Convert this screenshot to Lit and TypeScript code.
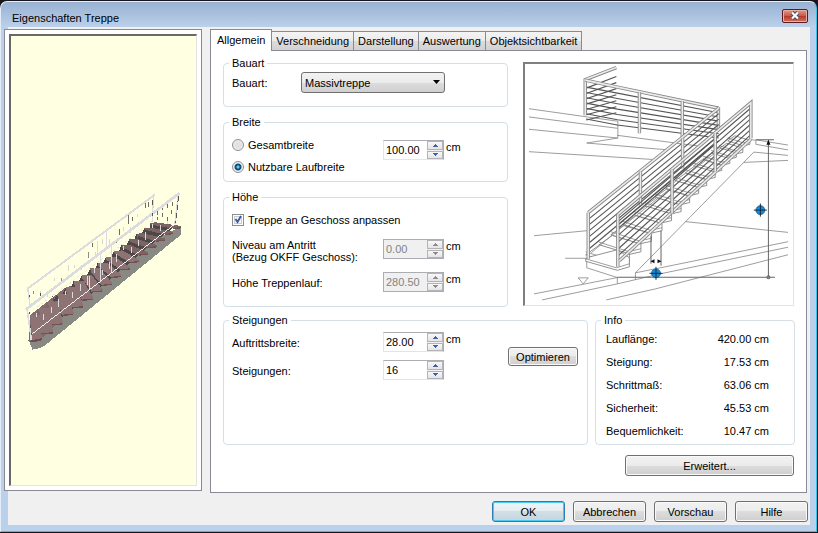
import { LitElement, html, css, svg } from "lit";
import { customElement, property, state } from "lit/decorators.js";
import { classMap } from "lit/directives/class-map.js";

const controls = css`
  * { box-sizing: border-box; }
  button, select, input { font: inherit; color: inherit; margin: 0; }
  svg { display: block; }
`;

type Pt = [number, number];
const pts = (p: Pt[]) => p.map((q) => q.join(",")).join(" ");

/* ---------- number box with up and down buttons ---------- */
@customElement("spin-box")
export class SpinBox extends LitElement {
  @property() value = "";
  @property() label = "";
  @property() unit = "";
  @property({ type: Boolean }) disabled = false;

  static styles = [controls, css`
    :host { display: flex; align-items: flex-start; gap: 2px; line-height: 14px; }
    .box { display: flex; width: 61px; height: 20px; border: 1px solid #e3e3e8; border-top-color: #abadb3; border-right-color: #abadb3; background: #fff; }
    .box.off { background: #f0f0f0; border-color: #abadb3; color: #838383; }
    input { flex: 1; min-width: 0; border: 0; padding: 0 0 0 2px; background: none; line-height: 18px; outline: 0; }
    .arrows { display: flex; flex-direction: column; width: 16px; background: #f0f0f0; gap: 1px; }
    .arrows button { flex: 1; min-height: 0; padding: 0; display: grid; place-items: center; border: 1px solid #b4b4b8; background: linear-gradient(#f8f8f8, #e4e4e8); }
    path { fill: #4a5da8; }
    .off path { fill: #8c8c8c; }
  `];

  private step(by: number) {
    const digits = this.value.includes(".") ? 2 : 0;
    this.value = (parseFloat(this.value) + by).toFixed(digits);
  }

  render() {
    return html`
      <div class=${classMap({ box: true, off: this.disabled })}>
        <input aria-label=${this.label} .value=${this.value} ?disabled=${this.disabled} />
        <div class="arrows">
          <button aria-label="+" ?disabled=${this.disabled} @click=${() => this.step(1)}>
            <svg width="5" height="3"><path d="M2 0h1v1h1v1h1v1H0V2h1V1h1z" /></svg>
          </button>
          <button aria-label="-" ?disabled=${this.disabled} @click=${() => this.step(-1)}>
            <svg width="5" height="3"><path d="M0 0h5v1H4v1H3v1H2V2H1V1H0z" /></svg>
          </button>
        </div>
      </div>
      <span>${this.unit}</span>`;
  }
}

/* ---------- rendered stair in the left pane ---------- */
@customElement("stair-preview")
export class StairPreview extends LitElement {
  static styles = css`
    :host { display: flex; background: #ffffe1; }
    svg { width: 100%; height: 100%; }
  `;

  render() {
    const right: Pt[] = [[547, 140], [523, 158], [497, 178], [472, 198], [445, 220], [420, 243], [392, 265], [365, 288], [337, 312], [308, 332], [280, 357], [250, 380], [220, 403], [187, 432], [157, 459], [123, 482]];
    const left: Pt[] = [[450, 130], [434, 146], [410, 163], [388, 180], [365, 197], [342, 215], [318, 234], [293, 252], [270, 268], [245, 289], [220, 307], [196, 325], [170, 346], [142, 368], [115, 390], [88, 410]];
    const steps = right.map((r, i) => {
      const l = left[i];
      const nextL = left[i + 1] ?? [80, 470];
      const nextR = right[i + 1] ?? [95, 490];
      const riser: Pt[] = [l, [r[0] - 26, r[1] + 3], [nextR[0] - 14, nextR[1] - 2], [nextL[0] + 16, nextL[1]]];
      const w = Math.min(20 + i, 32);
      const thick = 5 + i * 0.7;
      const tread: Pt[] = [l, [l[0] + w, l[1] - 1], r, [r[0] - 1, r[1] + 6], [r[0] - w - 4, r[1] + 8], [l[0] + 2, l[1] + thick]];
      return svg`<polygon points=${pts(riser)} fill=${i < 13 ? "#4d4747" : "#80686a"} />
        <polygon points=${pts(tread)} fill=${i < 5 ? "#7c6464" : "#8d7373"} />
        <path d="M${r[0] - w - 4} ${r[1] + 8}L${r[0] - 1} ${r[1] + 5}" stroke="#755052" stroke-width="4" />`;
    });
    const ticks = Array.from({ length: 16 }, (_, i) => {
      const x = 98 + i * 21;
      const y = 335 - (x - 80) * 0.74 + 14 + ((i * 7) % 5) * 8;
      return svg`<path d="M${x} ${y}v${9 + (i % 3) * 5}" stroke=${i % 4 ? "#d8d8d0" : "#8c8c86"} stroke-width="3" />`;
    });
    const balusters = Array.from({ length: 19 }, (_, i) => {
      const x = 108 + i * 22;
      const y = 450 - (x - 95) * 0.77 - 36 + ((i * 3) % 4) * 7;
      return svg`<path d="M${x} ${y}v${13 + (i % 4) * 4}" stroke="#dedede" stroke-width="3" />`;
    });
    const dots = Array.from({ length: 11 }, (_, i) => svg`<rect x=${85 + ((i * 37) % 75)} y=${350 + ((i * 23) % 50) - ((i * 37) % 75) * 0.4} width="3" height="4" fill="#55554f" />`);
    const hanging: [number, number, number][] = [[475, 92, 14], [490, 80, 12], [505, 68, 16], [520, 66, 12], [475, 112, 9], [490, 100, 12], [505, 112, 14], [518, 92, 10], [438, 70, 14], [448, 66, 16], [385, 108, 26], [397, 114, 12], [358, 150, 16], [278, 190, 14], [415, 165, 12]];
    return html`
      <svg viewBox="30 -435 561 1359" aria-label="3D" shape-rendering="crispEdges">
        <polygon points="85,488 95,515 118,510 132,503 547,165 547,141 480,175 130,455" fill="#898984" />
        <polygon points="85,488 88,410 196,326 300,300 130,475" fill="#846c6d" />
        ${steps}
        <path d="M85 488L123 480V486L90 492Z" fill="#704c4e" />
        ${ticks}${balusters}${dots}
        ${hanging.map(([x, y, h]) => svg`<path d="M${x} ${y}v${h}" stroke="#6d6d68" stroke-width="3" />`)}
        <g fill="none" stroke="#dcdce0">
          <path d="M80 330L466 45" stroke-width="6" />
          <path d="M81 330L88 385M320 153V205M301 225V308M334 198V280M292 185V225M268 290V330M462 50L458 128" stroke-width="4" />
          <path d="M110 385L440 142" stroke-width="2" stroke-dasharray="8 7" />
          <path d="M75 393L541 40" stroke-width="8" />
          <path d="M79 392L92 487M538 42L527 135" stroke-width="5" />
          <path d="M94 467L526 135" stroke="#f5f5f5" stroke-width="3" />
        </g>
        <path d="M538 50L529 130M460 60v16M459 100v10M85 400v6M89 440v8M92 465v5" stroke="#55554f" stroke-width="3" stroke-dasharray="16 9" />
      </svg>`;
  }
}

/* ---------- line drawing of the stair with its dimensions ---------- */
@customElement("stair-drawing")
export class StairDrawing extends LitElement {
  static styles = css`
    :host { display: flex; background: #fff; }
    svg { width: 100%; height: 100%; }
    .thin { fill: none; stroke: #858585; stroke-width: 0.8; }
    .rail { fill: none; stroke: #888; stroke-width: 3.4; }
    .core { fill: none; stroke: #ececec; stroke-width: 1.6; }
    .rung { fill: none; stroke: #555; stroke-width: 1.1; }
    .step { fill: #fff; stroke: #777; stroke-width: 0.8; }
    .dim { fill: none; stroke: #666; stroke-width: 1; }
  `;

  private bar(d: string) {
    return svg`<path class="rail" d=${d} /><path class="core" d=${d} />`;
  }

  render() {
    const upperRungs = [0, 1, 2, 3, 4, 5, 6].map((i) => svg`
      <path class="rung" d="M586 ${87 + i * 5.3}L617 ${93 + i * 5.3}L718 ${112.5 + i * 4.2}" />
      <path class="rung" d="M586 ${88 + i * 5.3}L616 ${76.5 + i * 6}" />`);
    const backRungs = [1, 2, 3, 4, 5, 6].map((i) => svg`<path class="rung" d="M589 ${212 + i * 6}L718 ${108 + i * 5.4}" />`);
    const frontRungs = [1, 2, 3, 4, 5, 6].map((i) => svg`<path class="rung" d="M618 ${214 + i * 6.8}L750 ${102.5 + i * 5.3}" />`);
    const ends: Pt[] = [[749, 144], [742, 152], [735.5, 157], [729, 163], [721, 170], [714.5, 177], [706, 185], [698, 193], [689, 202], [680.5, 211], [671, 220], [661.5, 230], [651, 240.5], [640.5, 251], [629, 261]];
    const treads = ends.map(([x, y], i) => {
      const s = 0.5 + i * 0.035;
      const a: Pt = [x - 13 * s, y + 3 * s];
      const b: Pt = [x - 44 * s, y - 7 * s];
      return svg`<polygon class="step" points=${pts([b, a, [x, y], [x, y - 8 * s], [x - 30 * s, y - 17 * s]])} />
        <path class="thin" d="M${b[0]} ${b[1] - 3}L${a[0]} ${a[1] - 3}L${x} ${y - 3}" />`;
    });
    const target = (x: number, y: number) => svg`
      <circle cx=${x} cy=${y} r="4.4" fill="#0f8ee0" stroke="#14507c" stroke-width="0.8" />
      <path d="M${x - 6.5} ${y}h13M${x} ${y - 6.5}v13" stroke="#102030" stroke-width="0.9" />`;
    return html`
      <svg viewBox="525 64 267 240" aria-label="Treppe">
        <path class="thin" d="M529 108.500L587 116.700L617.500 121V137.500M529 116.700L617 128M529 129L617.500 137.700L586.500 142.700L665 149.300M529 151.300L651.500 159M617 135L700 146M534 235L587 230M565 257.500H587" />
        ${upperRungs}
        ${this.bar("M585 115V79.500L616 67.500")}
        ${this.bar("M585 80L617 87L718 108")}
        ${this.bar("M639 92V133")}
        ${this.bar("M681.700 101V138")}
        ${this.bar("M717.700 107V130")}
        <path class="thin" d="M635 272L753 151.700L787 155M743 162L787 160M749 139L755 140V144L787 149.500M755 139.500L787 144.700M685 221L787 231.700" />
        <path class="thin" d="M655 268L787 241M635 272L655 268M655 274L787 246.500M606 299L655 288L787 254M534 293L617 276.700M542 299L617 283L660 273M635 272V279M586.500 259V267L617 276.700V283" />
        ${treads}
        <polygon class="step" points="585.500,258 590,256 617,249 629,257 629,266 617,269.500 585.500,260.500" />
        <path class="thin" d="M585.500 258L616 267L629 263" />
        ${backRungs}
        ${this.bar("M588 212L718 108")}
        ${this.bar("M588 212V258")}
        ${this.bar("M640 171V205")}
        ${this.bar("M682 138V168")}
        <path class="thin" d="M591 252L617 230L720 148" />
        ${frontRungs}
        <path class="rung" d="M618 224L715 142" />
        ${this.bar("M617.500 214L750 102.500V138")}
        ${this.bar("M617.500 214V266")}
        ${this.bar("M619 260L750 139")}
        ${this.bar("M671.500 169V213")}
        ${this.bar("M714.500 133V171")}
        <path class="thin" d="M578 277H588L583 283Z" />
        <path class="dim" d="M767.500 140V276.500M755 139.500H773M617 276.500H774M650.500 235V263M660.500 230V265" />
        <circle class="dim" cx="767.500" cy="276.500" r="1.500" />
        <path d="M767.500 139.500l2 5h-4zM650 260.500l4-2v4zM661 260.500l-4-2v4z" fill="#111" />
        ${target(655.5, 272.5)}${target(759.5, 209.5)}
      </svg>`;
  }
}

/* ---------- dialog ---------- */
@customElement("app-root")
export class AppRoot extends LitElement {
  @state() private tab = 0;

  private tabs = ["Allgemein", "Verschneidung", "Darstellung", "Auswertung", "Objektsichtbarkeit"];
  private info = [
    ["Lauflänge:", "420.00 cm"],
    ["Steigung:", "17.53 cm"],
    ["Schrittmaß:", "63.06 cm"],
    ["Sicherheit:", "45.53 cm"],
    ["Bequemlichkeit:", "10.47 cm"],
  ];

  static styles = [controls, css`
    :host { display: flex; min-height: 100vh; background: #16161c; color: #000; font: 11px/14px "Liberation Sans", Arial, sans-serif; }
    .window { flex: 1; display: flex; flex-direction: column; min-width: 0; margin: 1px 1px 1px 0; padding: 0 6px 6px 7px; border: 1px solid #e4edf8; border-right-color: #35c4e8; border-bottom-color: #35c4e8; border-radius: 7px 7px 0 0; background: linear-gradient(#98b2d2, #bbd0ea 25px, #b9d1ea); }
    header { display: flex; align-items: center; justify-content: space-between; height: 25px; padding: 6px 0 0 4px; }
    h1 { margin: 0; font-size: 11px; font-weight: 400; line-height: 14px; }
    .close { width: 26px; height: 14px; padding: 0; margin: 0 2px 4px 0; display: grid; place-items: center; border: 1px solid #5a1c22; border-radius: 2px; box-shadow: inset 0 0 0 1px #e8b0a4; background: linear-gradient(#e09a8c, #c8564a 50%, #b03a2c 50%, #d4705a); }
    .client { flex: 1; display: grid; grid-template-columns: 194px minmax(0, 1fr); grid-template-rows: 1fr auto; column-gap: 8px; background: #f0f0f0; padding: 2px 2px 3px 0; }
    .pane { margin: 0 0 2px -4px; padding: 4px; display: flex; border: 1px solid #8a8a96; background: #fff; }
    stair-preview { flex: 1; min-width: 0; border: 1px solid #e3e3e3; border-top: 2px solid #696969; border-left: 2px solid #696969; }
    .right { display: flex; flex-direction: column; min-width: 0; margin-right: 1px; }
    .tabs { display: flex; align-items: flex-end; height: 21px; }
    .tabs button { height: 19px; padding: 0 4px; border: 1px solid #8a8a96; border-left-width: 0; border-bottom: 0; background: linear-gradient(#f4f4f4, #ebebeb 50%, #dcdcdc 50%, #d2d2d2); line-height: 14px; white-space: nowrap; }
    .tabs button.on { height: 22px; padding: 0 6px 2px; margin-bottom: -1px; border-left-width: 1px; background: #fff; z-index: 1; }
    .sheet { flex: 1; border: 1px solid #8a8a96; background: #fff; padding: 5px 11px 16px 12px; }
    .upper { display: grid; grid-template-columns: 285px minmax(0, 1fr); gap: 15px; }
    .groups { display: flex; flex-direction: column; gap: 8px; }
    .lower { display: grid; grid-template-columns: minmax(0, 1fr) 200px; gap: 7px; margin-top: 6px; }
    fieldset { min-width: 0; margin: 0; padding: 0 8px; border: 1px solid #d5dfe5; border-radius: 4px; }
    legend { padding: 0 3px; margin-left: -3px; }
    .row { display: grid; grid-template-columns: 151px auto; align-items: start; }
    .row > span { padding-top: 4px; }
    .bauart { padding-top: 2px; padding-bottom: 13px; }
    .type { display: grid; grid-template-columns: 69px 144px; align-items: center; }
    .combo { position: relative; }
    select { width: 100%; height: 21px; padding: 0 3px; appearance: none; border: 1px solid #707070; border-radius: 3px; background: linear-gradient(#f2f2f2, #ebebeb 50%, #dddddd 50%, #cfcfcf); }
    .combo svg { position: absolute; right: 5px; top: 8px; pointer-events: none; }
    .breite { padding-top: 5px; padding-bottom: 3px; }
    .breite .row > spin-box { margin-top: 6px; }
    .choice { display: flex; align-items: center; gap: 4px; height: 22px; }
    input[type="radio"] { appearance: none; width: 12px; height: 12px; border: 1px solid #8e8f8f; border-radius: 50%; background: radial-gradient(#e2e2e2 40%, #f8f8f8); }
    input[type="radio"]:checked { background: radial-gradient(circle at 50% 50%, #62c8ee 0 1px, #12507c 2px 3px, #eef2f5 4px); }
    .hoehe { padding-top: 5px; padding-bottom: 14px; }
    .check { position: relative; }
    input[type="checkbox"] { appearance: none; width: 12px; height: 12px; border: 1px solid #8e8f8f; background: #f4f4f4; box-shadow: inset 0 0 0 1px #fff, inset 0 0 0 2px #c9cdd2; }
    .check svg { position: absolute; left: 2px; top: 6px; visibility: hidden; pointer-events: none; }
    .check input:checked + svg { visibility: visible; }
    .level { margin-top: 8px; }
    .row > .two { padding: 0; line-height: 12px; }
    .height { margin-top: 9px; }
    .steig { display: flex; justify-content: space-between; padding-top: 5px; }
    .fields { display: flex; flex-direction: column; gap: 8px; }
    .push { height: 21px; padding: 0; border: 1px solid #707070; border-radius: 3px; box-shadow: inset 0 0 0 1px #fafafa; background: linear-gradient(#f2f2f2, #ebebeb 50%, #dddddd 50%, #cfcfcf); }
    .optimize { width: 70px; height: 19px; margin: 15px 1px 0 0; }
    .infobox { padding-bottom: 2px; }
    table { width: 100%; border-collapse: collapse; }
    th, td { height: 23px; padding: 0; font-weight: 400; text-align: left; }
    th { padding-left: 2px; }
    td { text-align: right; padding-right: 17px; }
    .more { display: flex; justify-content: flex-end; margin-top: 10px; }
    .more .push { width: 169px; margin-right: 1px; }
    stair-drawing { min-width: 0; height: 244px; margin: 6px 1px 0 0; border: 1px solid #e3e3e3; border-top: 2px solid #808080; border-left: 2px solid #808080; }
    footer { grid-column: 1 / -1; display: flex; justify-content: flex-end; gap: 8px; padding-top: 8px; }
    footer .push { width: 73px; }
    .push.default { border-color: #2c7db0; box-shadow: inset 0 0 0 1px #48cbf2; background: linear-gradient(#f0f5f8, #e4edf2 50%, #d2dfe6 50%, #c4d5de); }
  `];

  render() {
    return html`
      <div class="window">
        <header>
          <h1>Eigenschaften Treppe</h1>
          <button class="close" aria-label="Schließen">
            <svg width="12" height="9" viewBox="0 0 12 9"><path d="M3 1.500L9 7.500M9 1.500L3 7.500" stroke="#4c4a5c" stroke-width="4" /><path d="M3 1.500L9 7.500M9 1.500L3 7.500" stroke="#fff" stroke-width="2.200" /></svg>
          </button>
        </header>
        <main class="client">
          <section class="pane"><stair-preview></stair-preview></section>
          <section class="right">
            <div class="tabs" role="tablist">
              ${this.tabs.map((t, i) => html`<button role="tab" aria-selected=${i === this.tab} class=${classMap({ on: i === this.tab })} @click=${() => (this.tab = i)}>${t}</button>`)}
            </div>
            <div class="sheet">
              <div class="upper">
                <div class="groups">
                  <fieldset class="bauart">
                    <legend>Bauart</legend>
                    <div class="type">
                      <label for="type">Bauart:</label>
                      <div class="combo">
                        <select id="type"><option>Massivtreppe</option></select>
                        <svg width="7" height="4"><path d="M0 0h7L3.500 4z" /></svg>
                      </div>
                    </div>
                  </fieldset>
                  <fieldset class="breite">
                    <legend>Breite</legend>
                    <div class="row">
                      <div class="choices">
                        <label class="choice"><input type="radio" name="width" />Gesamtbreite</label>
                        <label class="choice"><input type="radio" name="width" checked />Nutzbare Laufbreite</label>
                      </div>
                      <spin-box label="Breite" value="100.00" unit="cm"></spin-box>
                    </div>
                  </fieldset>
                  <fieldset class="hoehe">
                    <legend>Höhe</legend>
                    <label class="choice check"><input type="checkbox" checked /><svg width="9" height="9"><path d="M1.500 4L3.500 7L7 1" fill="none" stroke="#3d55a0" stroke-width="1.800" /></svg>Treppe an Geschoss anpassen</label>
                    <div class="row level">
                      <span class="two">Niveau am Antritt<br />(Bezug OKFF Geschoss):</span>
                      <spin-box label="Niveau am Antritt" value="0.00" unit="cm" disabled></spin-box>
                    </div>
                    <div class="row height">
                      <span>Höhe Treppenlauf:</span>
                      <spin-box label="Höhe Treppenlauf" value="280.50" unit="cm" disabled></spin-box>
                    </div>
                  </fieldset>
                </div>
                <stair-drawing></stair-drawing>
              </div>
              <div class="lower">
                <fieldset>
                  <legend>Steigungen</legend>
                  <div class="steig">
                    <div class="fields">
                      <div class="row"><span>Auftrittsbreite:</span><spin-box label="Auftrittsbreite" value="28.00" unit="cm"></spin-box></div>
                      <div class="row"><span>Steigungen:</span><spin-box label="Steigungen" value="16"></spin-box></div>
                    </div>
                    <button class="push optimize">Optimieren</button>
                  </div>
                </fieldset>
                <fieldset class="infobox">
                  <legend>Info</legend>
                  <table>
                    ${this.info.map(([k, v]) => html`<tr><th scope="row">${k}</th><td>${v}</td></tr>`)}
                  </table>
                </fieldset>
              </div>
              <div class="more"><button class="push">Erweitert...</button></div>
            </div>
          </section>
          <footer>
            <button class="push default">OK</button>
            <button class="push">Abbrechen</button>
            <button class="push">Vorschau</button>
            <button class="push">Hilfe</button>
          </footer>
        </main>
      </div>`;
  }
}
